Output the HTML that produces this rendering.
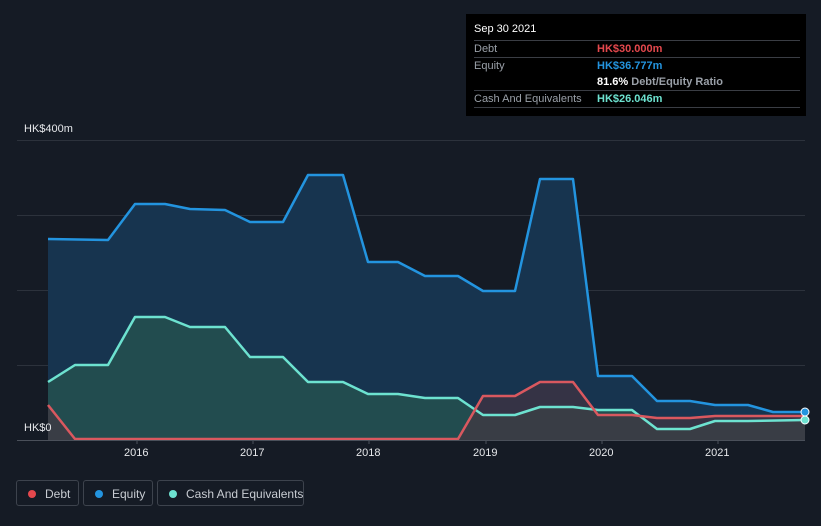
<!DOCTYPE html>
<html><head><style>
body{margin:0;background:#151b25;font-family:"Liberation Sans",sans-serif;}
.wrap{position:relative;width:821px;height:526px;overflow:hidden;background:#151b25;}
.tt{position:absolute;left:466px;top:14px;width:340px;height:102px;background:#000;color:#fff;font-size:11px;}
.tt .r{position:absolute;left:8px;width:326px;border-top:1px solid #3a3d44;height:17px;line-height:17px;}
.tt .l{color:#9aa0a8;}
.tt .v{position:absolute;left:123px;top:0;font-weight:bold;}
.leg{position:absolute;top:480px;height:26px;border:1px solid #3d434d;border-radius:3px;color:#c8ccd2;font-size:12px;line-height:26px;box-sizing:border-box;white-space:nowrap;}
.leg i{position:absolute;left:11px;top:9px;width:8px;height:8px;border-radius:50%;}
.ax{position:absolute;color:#e6e8eb;font-size:11px;}
</style></head><body><div class="wrap">
<svg width="821" height="526" style="position:absolute;left:0;top:0">
<g stroke="#2c323c" stroke-width="1">
<line x1="17" y1="140.5" x2="805" y2="140.5"/><line x1="17" y1="215.5" x2="805" y2="215.5"/>
<line x1="17" y1="290.5" x2="805" y2="290.5"/><line x1="17" y1="365.5" x2="805" y2="365.5"/>
</g>
<polygon fill="#17344f" points="48,239 108,240 135,204 165,204 190,209 225,210 250,222 283,222 308,175 343,175 368,262 398,262 425,276 458,276 483,291 515,291 540,179 573,179 598,376 632,376 657,401 690,401 715,405 748,405 773,412 805,412 805,440 48,440"/>
<polygon fill="#24514f" opacity="0.85" points="48,382 75,365 108,365 135,317 165,317 190,327 225,327 250,357 283,357 308,382 343,382 368,394 398,394 425,398 458,398 483,415 515,415 540,407 573,407 598,410 632,410 657,429 690,429 715,421 748,421 805,420 805,440 48,440"/>
<polygon fill="#4a3440" opacity="0.6" points="48,405 75,439 458,439 483,396 515,396 540,382 573,382 598,415 632,415 657,418 690,418 715,416 805,416 805,440 48,440"/>
<g fill="none" stroke-width="2.5" stroke-linejoin="round">
<polyline stroke="#2394df" points="48,239 108,240 135,204 165,204 190,209 225,210 250,222 283,222 308,175 343,175 368,262 398,262 425,276 458,276 483,291 515,291 540,179 573,179 598,376 632,376 657,401 690,401 715,405 748,405 773,412 805,412"/>
<polyline stroke="#6de2d0" points="48,382 75,365 108,365 135,317 165,317 190,327 225,327 250,357 283,357 308,382 343,382 368,394 398,394 425,398 458,398 483,415 515,415 540,407 573,407 598,410 632,410 657,429 690,429 715,421 748,421 805,420"/>
<polyline stroke="#d9585f" points="48,405 75,439 458,439 483,396 515,396 540,382 573,382 598,415 632,415 657,418 690,418 715,416 805,416"/>
</g>
<line x1="17" y1="440.5" x2="805" y2="440.5" stroke="#4a505a"/>
<g stroke="#4a505a"><line x1="137" y1="440" x2="137" y2="444"/><line x1="253" y1="440" x2="253" y2="444"/><line x1="369" y1="440" x2="369" y2="444"/><line x1="486" y1="440" x2="486" y2="444"/><line x1="602" y1="440" x2="602" y2="444"/><line x1="718" y1="440" x2="718" y2="444"/></g>
<circle cx="805" cy="412" r="4" fill="#2394df" stroke="#fff" stroke-width="1"/>
<circle cx="805" cy="420" r="4" fill="#6de2d0" stroke="#fff" stroke-width="1"/>
</svg>
<div class="ax" style="left:24px;top:123px">HK$400m</div>
<div class="ax" style="left:24px;top:422px">HK$0</div>
<div class="ax" style="left:124px;top:447px">2016</div>
<div class="ax" style="left:240px;top:447px">2017</div>
<div class="ax" style="left:356px;top:447px">2018</div>
<div class="ax" style="left:473px;top:447px">2019</div>
<div class="ax" style="left:589px;top:447px">2020</div>
<div class="ax" style="left:705px;top:447px">2021</div>
<div class="tt">
<div style="position:absolute;left:8px;top:9px;">Sep 30 2021</div>
<div class="r" style="top:26px"><span class="l">Debt</span><span class="v" style="color:#e5484d">HK$30.000m</span></div>
<div class="r" style="top:43px"><span class="l">Equity</span><span class="v" style="color:#2394df">HK$36.777m</span></div>
<div class="r" style="top:60px;border-top:none"><span class="v" style="color:#fff">81.6% <span style="color:#9aa0a8;font-weight:bold">Debt/Equity Ratio</span></span></div>
<div class="r" style="top:76px"><span class="l">Cash And Equivalents</span><span class="v" style="color:#6de2d0">HK$26.046m</span></div>
<div class="r" style="top:93px;height:0"></div>
</div>
<div class="leg" style="left:16px;width:63px"><i style="background:#e5484d"></i><span style="position:absolute;left:28px">Debt</span></div>
<div class="leg" style="left:83px;width:70px"><i style="background:#2394df"></i><span style="position:absolute;left:28px">Equity</span></div>
<div class="leg" style="left:157px;width:147px"><i style="background:#6de2d0"></i><span style="position:absolute;left:28px">Cash And Equivalents</span></div>
</div></body></html>
